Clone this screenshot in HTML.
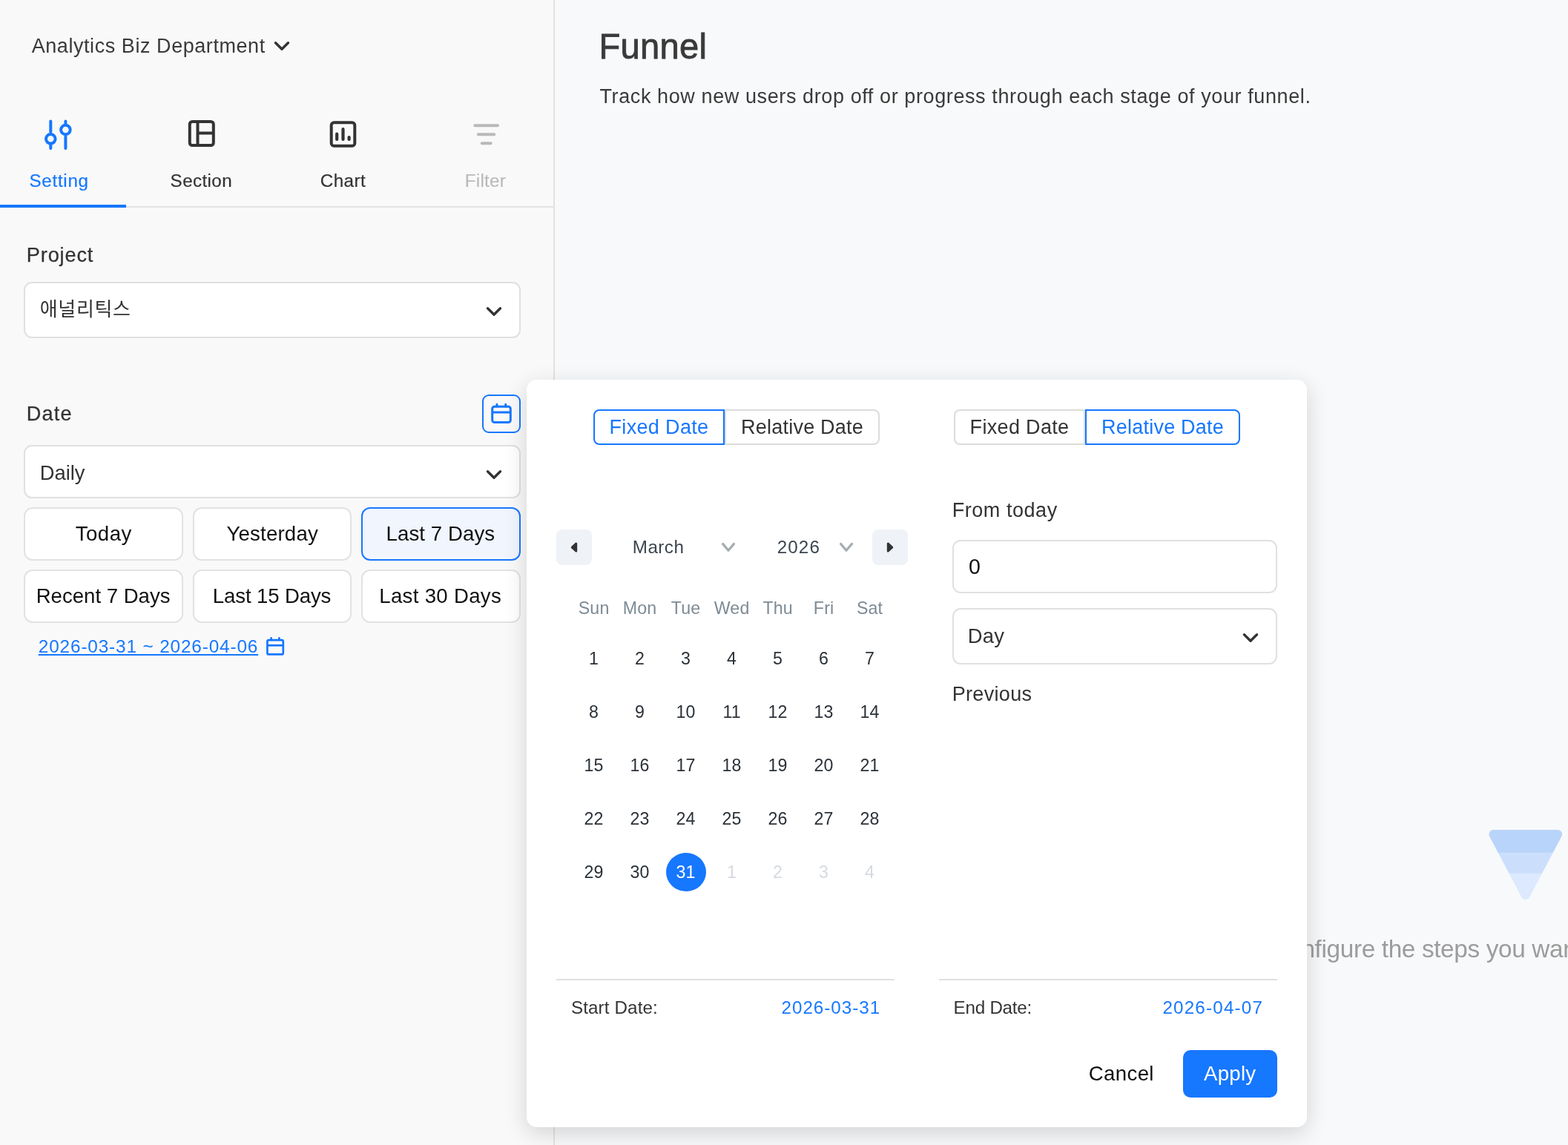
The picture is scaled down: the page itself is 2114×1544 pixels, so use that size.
<!DOCTYPE html>
<html lang="en"><head><meta charset="utf-8"><title>Funnel</title>
<style>
html,body{margin:0;padding:0}
body{width:2114px;height:1544px;overflow:hidden;position:relative;background:#f8f9fb;font-family:'Liberation Sans','Noto Sans CJK KR',sans-serif;}
#app{position:absolute;left:0;top:0;width:2114px;height:1544px;will-change:transform}
.b{position:absolute;box-sizing:border-box}
.t{position:absolute;white-space:nowrap;line-height:0;font-weight:400}
.t::before{content:'';display:inline-block;height:40px;width:0}
.c{text-align:center}
svg{position:absolute;left:0;top:0;overflow:visible}
.sel{background:#fff;border:2px solid #e0e0e0;border-radius:11px}
.pb{background:#fff;border:2px solid #e2e2e2;border-radius:12px}
</style></head><body><div id="app">

<aside class="b" style="left:0;top:0;width:748px;height:1544px;background:#f9f9f9;border-right:2px solid #e3e3e3">
<div class="b" style="left:0px;top:278px;width:746px;height:2px;background:#e3e3e3"></div>
<div class="b" style="left:0px;top:276px;width:170px;height:4px;background:#1677ff"></div>
<div class="b sel" style="left:32px;top:380px;width:670px;height:76px;"></div>
<div class="b sel" style="left:32px;top:600px;width:670px;height:72px;"></div>
<div class="b" style="left:650px;top:532px;width:52px;height:52px;border:2px solid #1677ff;border-radius:9px"></div>
<div class="b pb" style="left:32px;top:684px;width:214.7px;height:72px;"></div>
<div class="b pb" style="left:32px;top:768px;width:214.7px;height:72px;"></div>
<div class="b pb" style="left:259.7px;top:684px;width:214.7px;height:72px;"></div>
<div class="b pb" style="left:259.7px;top:768px;width:214.7px;height:72px;"></div>
<div class="b" style="left:487.3px;top:684px;width:214.7px;height:72px;background:#f1f5fe;border:2px solid #1677ff;border-radius:12px"></div>
<div class="b pb" style="left:487.3px;top:768px;width:214.7px;height:72px;"></div>
<span class="t" style="left:42.7px;top:31.0px;font-size:27px;color:#3a3a3a;letter-spacing:0.56px;">Analytics Biz Department</span>
<span class="t" style="left:39.5px;top:212.0px;font-size:24.2px;color:#1677ff;letter-spacing:0.70px;-webkit-text-stroke:0.2px #1677ff;">Setting</span>
<span class="t" style="left:229.6px;top:212.0px;font-size:24.2px;color:#333;letter-spacing:0.40px;-webkit-text-stroke:0.2px #333;">Section</span>
<span class="t" style="left:431.8px;top:212.0px;font-size:24.2px;color:#333;letter-spacing:0.45px;-webkit-text-stroke:0.2px #333;">Chart</span>
<span class="t" style="left:626.7px;top:212.0px;font-size:24.2px;color:#bbb;letter-spacing:0.29px;-webkit-text-stroke:0.2px #bbb;">Filter</span>
<span class="t" style="left:35.8px;top:313.0px;font-size:27.2px;color:#333;letter-spacing:0.83px;-webkit-text-stroke:0.25px #333;">Project</span>
<span class="t" style="left:53.8px;top:386.0px;font-size:26px;color:#333;letter-spacing:0.62px;">애널리틱스</span>
<span class="t" style="left:35.8px;top:527.0px;font-size:27.2px;color:#333;letter-spacing:1.10px;-webkit-text-stroke:0.25px #333;">Date</span>
<span class="t" style="left:53.8px;top:607.0px;font-size:27.4px;color:#333;letter-spacing:-0.08px;">Daily</span>
<span class="t" style="left:101.8px;top:689.0px;font-size:27.6px;color:#111;letter-spacing:0.45px;">Today</span>
<span class="t" style="left:305.4px;top:689.0px;font-size:27.6px;color:#111;letter-spacing:0.21px;">Yesterday</span>
<span class="t" style="left:520.6px;top:689.0px;font-size:27.6px;color:#111;letter-spacing:0.08px;">Last 7 Days</span>
<span class="t" style="left:48.7px;top:773.0px;font-size:27.6px;color:#111;letter-spacing:-0.01px;">Recent 7 Days</span>
<span class="t" style="left:286.8px;top:773.0px;font-size:27.6px;color:#111;letter-spacing:-0.13px;">Last 15 Days</span>
<span class="t" style="left:511.3px;top:773.0px;font-size:27.6px;color:#111;letter-spacing:0.31px;">Last 30 Days</span>
<span class="t" style="left:51.8px;top:840.0px;font-size:24.4px;color:#1677ff;letter-spacing:0.83px;text-decoration:underline;text-decoration-thickness:1.8px;text-underline-offset:2px;">2026-03-31 ~ 2026-04-06</span>
<svg width="748" height="1544" viewBox="0 0 748 1544" fill="none" stroke-linecap="round" stroke-linejoin="round">
<path d="M371.5 57.8 380 66.2 388.5 57.8" stroke="#333" stroke-width="3.4"/>
<g stroke="#1677ff" stroke-width="4"><path d="M68.3 163.5V178M68.3 195V200M88.4 163.5V166M88.4 184V200"/><circle cx="68.3" cy="187.3" r="6.3"/><circle cx="88.4" cy="175" r="6.3"/></g>
<g stroke="#333" stroke-width="4"><rect x="255.8" y="164" width="32" height="32" rx="3.5"/><path d="M266.5 164V196M266.5 179.5H288" stroke-linecap="butt"/></g>
<g stroke="#333" stroke-width="4"><rect x="446.7" y="165.3" width="31.6" height="31.4" rx="3.5"/><path d="M454.2 180.5V188M462.5 174.2V188M470.6 185V188" stroke-width="4.2"/></g>
<g stroke="#b9b9b9" stroke-width="4"><path d="M640.3 169.2H671M644.8 181.2H666.2M649.8 193.3H661.7"/></g>
<path d="M657.5 415.8 666 424.2 674.5 415.8" stroke="#333" stroke-width="3.4"/>
<path d="M657.5 635.8 666 644.2 674.5 635.8" stroke="#333" stroke-width="3.4"/>
<g stroke="#1677ff" stroke-width="3"><rect x="663.7" y="548.2" width="24.6" height="21.3" rx="3"/><path d="M663.7 556H688.3" stroke-linecap="butt"/><path d="M669.9 545.2V548M681.7 545.2V548"/></g>
<g stroke="#1677ff" stroke-width="2.7"><rect x="360.4" y="863.2" width="21.4" height="19.2" rx="2"/><path d="M360.4 870.3H381.8" stroke-linecap="butt"/><path d="M365.6 860.4V863M376.4 860.4V863"/></g>
</svg>
</aside>
<main class="b" style="left:748px;top:0;width:1366px;height:1544px;overflow:hidden">
<span class="t" style="left:59.4px;top:39.0px;font-size:47.2px;color:#3a3a3a;letter-spacing:0.24px;-webkit-text-stroke:0.8px #3a3a3a;">Funnel</span>
<span class="t" style="left:60.5px;top:99.0px;font-size:27px;color:#3a3a3a;letter-spacing:0.60px;">Track how new users drop off or progress through each stage of your funnel.</span>
<span class="t" style="left:964.5px;top:1251.0px;font-size:33.3px;color:#9c9c9c;letter-spacing:-0.34px">Configure the steps you want to analyze.</span>
<svg width="1366" height="1544" viewBox="748 0 1366 1544">
<defs><clipPath id="fc"><path d="M2008.1 1127.8A6 6 0 0 1 2013.4 1119.0L2100.1 1119.0A6 6 0 0 1 2105.4 1127.8L2062.1 1209.7A6 6 0 0 1 2051.4 1209.7Z"/></clipPath></defs>
<g clip-path="url(#fc)"><rect x="2000" y="1110" width="120" height="40.2" fill="#b9d4fa"/><rect x="2000" y="1150.2" width="120" height="27.7" fill="#cbdffc"/><rect x="2000" y="1177.9" width="120" height="45" fill="#dce9fe"/></g>
</svg>
</main>
<section class="b" style="left:710px;top:512px;width:1052px;height:1008px;background:#fff;border-radius:14px;box-shadow:0 8px 31px rgba(0,0,0,0.155)">
<div class="b" style="left:267px;top:40px;width:209px;height:48px;border:2px solid #dcdcdc;border-radius:0 8px 8px 0"></div>
<div class="b" style="left:90px;top:40px;width:177px;height:48px;border:2px solid #1677ff;border-radius:8px 0 0 8px"></div>
<div class="b" style="left:576px;top:40px;width:177px;height:48px;border:2px solid #dcdcdc;border-radius:8px 0 0 8px"></div>
<div class="b" style="left:753px;top:40px;width:209px;height:48px;border:2px solid #1677ff;border-radius:0 8px 8px 0"></div>
<div class="b" style="left:40px;top:202px;width:48px;height:48px;background:#eff2f7;border-radius:8px"></div>
<div class="b" style="left:466px;top:202px;width:48px;height:48px;background:#eff2f7;border-radius:8px"></div>
<div class="b" style="left:188px;top:638px;width:54px;height:52px;background:#1677ff;border-radius:50%"></div>
<div class="b sel" style="left:574px;top:216px;width:438px;height:72px;"></div>
<div class="b sel" style="left:574px;top:308px;width:438px;height:76px;"></div>
<div class="b" style="left:40px;top:807.5px;width:456px;height:2px;background:#e0e0e0"></div>
<div class="b" style="left:556px;top:807.5px;width:456px;height:2px;background:#e0e0e0"></div>
<div class="b" style="left:885px;top:904px;width:127px;height:64px;background:#1677ff;border-radius:10px"></div>
<span class="t" style="left:111.5px;top:33.0px;font-size:27px;color:#1677ff;letter-spacing:0.34px;">Fixed Date</span>
<span class="t" style="left:289.1px;top:33.0px;font-size:27px;color:#333;letter-spacing:0.22px;">Relative Date</span>
<span class="t" style="left:597.6px;top:33.0px;font-size:27px;color:#333;letter-spacing:0.33px;">Fixed Date</span>
<span class="t" style="left:775.1px;top:33.0px;font-size:27px;color:#1677ff;letter-spacing:0.22px;">Relative Date</span>
<span class="t" style="left:142.8px;top:194.0px;font-size:24.2px;color:#3b454e;letter-spacing:0.46px;">March</span>
<span class="t" style="left:337.8px;top:194.0px;font-size:24.2px;color:#3b454e;letter-spacing:1.08px;">2026</span>
<span class="t" style="left:573.7px;top:145.0px;font-size:27px;color:#333;letter-spacing:0.55px;">From today</span>
<span class="t" style="left:596.0px;top:222.0px;font-size:28.6px;color:#111;">0</span>
<span class="t" style="left:594.8px;top:315.0px;font-size:27.4px;color:#333;letter-spacing:0.23px;">Day</span>
<span class="t" style="left:573.7px;top:393.0px;font-size:27px;color:#333;letter-spacing:0.33px;">Previous</span>
<span class="t" style="left:59.9px;top:815.0px;font-size:24.2px;color:#333;letter-spacing:0.13px;">Start Date:</span>
<span class="t" style="left:343.5px;top:815.0px;font-size:24.2px;color:#1677ff;letter-spacing:1.00px;">2026-03-31</span>
<span class="t" style="left:575.5px;top:815.0px;font-size:24.2px;color:#333;letter-spacing:-0.22px;">End Date:</span>
<span class="t" style="left:857.4px;top:815.0px;font-size:24.2px;color:#1677ff;letter-spacing:1.20px;">2026-04-07</span>
<span class="t" style="left:757.8px;top:905.0px;font-size:27.6px;color:#111;letter-spacing:0.36px;">Cancel</span>
<span class="t" style="left:913.1px;top:905.0px;font-size:27.6px;color:#fff;letter-spacing:0.26px;">Apply</span>
<span class="t c" style="left:50.6px;top:276.0px;width:80px;font-size:23.2px;color:#7d8b95;letter-spacing:0.15px;">Sun</span>
<span class="t c" style="left:112.6px;top:276.0px;width:80px;font-size:23.2px;color:#7d8b95;letter-spacing:0.15px;">Mon</span>
<span class="t c" style="left:174.6px;top:276.0px;width:80px;font-size:23.2px;color:#7d8b95;letter-spacing:0.15px;">Tue</span>
<span class="t c" style="left:236.6px;top:276.0px;width:80px;font-size:23.2px;color:#7d8b95;letter-spacing:0.15px;">Wed</span>
<span class="t c" style="left:298.6px;top:276.0px;width:80px;font-size:23.2px;color:#7d8b95;letter-spacing:0.15px;">Thu</span>
<span class="t c" style="left:360.6px;top:276.0px;width:80px;font-size:23.2px;color:#7d8b95;letter-spacing:0.15px;">Fri</span>
<span class="t c" style="left:422.6px;top:276.0px;width:80px;font-size:23.2px;color:#7d8b95;letter-spacing:0.15px;">Sat</span>
<span class="t c" style="left:50.5px;top:344.0px;width:80px;font-size:23.2px;color:#2b3138;letter-spacing:0px;">1</span>
<span class="t c" style="left:112.5px;top:344.0px;width:80px;font-size:23.2px;color:#2b3138;letter-spacing:0px;">2</span>
<span class="t c" style="left:174.5px;top:344.0px;width:80px;font-size:23.2px;color:#2b3138;letter-spacing:0px;">3</span>
<span class="t c" style="left:236.5px;top:344.0px;width:80px;font-size:23.2px;color:#2b3138;letter-spacing:0px;">4</span>
<span class="t c" style="left:298.5px;top:344.0px;width:80px;font-size:23.2px;color:#2b3138;letter-spacing:0px;">5</span>
<span class="t c" style="left:360.5px;top:344.0px;width:80px;font-size:23.2px;color:#2b3138;letter-spacing:0px;">6</span>
<span class="t c" style="left:422.5px;top:344.0px;width:80px;font-size:23.2px;color:#2b3138;letter-spacing:0px;">7</span>
<span class="t c" style="left:50.5px;top:416.0px;width:80px;font-size:23.2px;color:#2b3138;letter-spacing:0px;">8</span>
<span class="t c" style="left:112.5px;top:416.0px;width:80px;font-size:23.2px;color:#2b3138;letter-spacing:0px;">9</span>
<span class="t c" style="left:174.5px;top:416.0px;width:80px;font-size:23.2px;color:#2b3138;letter-spacing:0px;">10</span>
<span class="t c" style="left:236.5px;top:416.0px;width:80px;font-size:23.2px;color:#2b3138;letter-spacing:0px;">11</span>
<span class="t c" style="left:298.5px;top:416.0px;width:80px;font-size:23.2px;color:#2b3138;letter-spacing:0px;">12</span>
<span class="t c" style="left:360.5px;top:416.0px;width:80px;font-size:23.2px;color:#2b3138;letter-spacing:0px;">13</span>
<span class="t c" style="left:422.5px;top:416.0px;width:80px;font-size:23.2px;color:#2b3138;letter-spacing:0px;">14</span>
<span class="t c" style="left:50.5px;top:488.0px;width:80px;font-size:23.2px;color:#2b3138;letter-spacing:0px;">15</span>
<span class="t c" style="left:112.5px;top:488.0px;width:80px;font-size:23.2px;color:#2b3138;letter-spacing:0px;">16</span>
<span class="t c" style="left:174.5px;top:488.0px;width:80px;font-size:23.2px;color:#2b3138;letter-spacing:0px;">17</span>
<span class="t c" style="left:236.5px;top:488.0px;width:80px;font-size:23.2px;color:#2b3138;letter-spacing:0px;">18</span>
<span class="t c" style="left:298.5px;top:488.0px;width:80px;font-size:23.2px;color:#2b3138;letter-spacing:0px;">19</span>
<span class="t c" style="left:360.5px;top:488.0px;width:80px;font-size:23.2px;color:#2b3138;letter-spacing:0px;">20</span>
<span class="t c" style="left:422.5px;top:488.0px;width:80px;font-size:23.2px;color:#2b3138;letter-spacing:0px;">21</span>
<span class="t c" style="left:50.5px;top:560.0px;width:80px;font-size:23.2px;color:#2b3138;letter-spacing:0px;">22</span>
<span class="t c" style="left:112.5px;top:560.0px;width:80px;font-size:23.2px;color:#2b3138;letter-spacing:0px;">23</span>
<span class="t c" style="left:174.5px;top:560.0px;width:80px;font-size:23.2px;color:#2b3138;letter-spacing:0px;">24</span>
<span class="t c" style="left:236.5px;top:560.0px;width:80px;font-size:23.2px;color:#2b3138;letter-spacing:0px;">25</span>
<span class="t c" style="left:298.5px;top:560.0px;width:80px;font-size:23.2px;color:#2b3138;letter-spacing:0px;">26</span>
<span class="t c" style="left:360.5px;top:560.0px;width:80px;font-size:23.2px;color:#2b3138;letter-spacing:0px;">27</span>
<span class="t c" style="left:422.5px;top:560.0px;width:80px;font-size:23.2px;color:#2b3138;letter-spacing:0px;">28</span>
<span class="t c" style="left:50.5px;top:632.0px;width:80px;font-size:23.2px;color:#2b3138;letter-spacing:0px;">29</span>
<span class="t c" style="left:112.5px;top:632.0px;width:80px;font-size:23.2px;color:#2b3138;letter-spacing:0px;">30</span>
<span class="t c" style="left:174.5px;top:632.0px;width:80px;font-size:23.2px;color:#fff;letter-spacing:0px;">31</span>
<span class="t c" style="left:236.5px;top:632.0px;width:80px;font-size:23.2px;color:#d5dbe0;letter-spacing:0px;">1</span>
<span class="t c" style="left:298.5px;top:632.0px;width:80px;font-size:23.2px;color:#d5dbe0;letter-spacing:0px;">2</span>
<span class="t c" style="left:360.5px;top:632.0px;width:80px;font-size:23.2px;color:#d5dbe0;letter-spacing:0px;">3</span>
<span class="t c" style="left:422.5px;top:632.0px;width:80px;font-size:23.2px;color:#d5dbe0;letter-spacing:0px;">4</span>
<svg width="1052" height="1008" viewBox="710 512 1052 1008" fill="none" stroke-linecap="round" stroke-linejoin="round">
<path d="M776.8 732.9V743.3L771.2 738.1Z" fill="#333" stroke="#333" stroke-width="2.8"/>
<path d="M1197.2 732.9V743.3L1202.8 738.1Z" fill="#333" stroke="#333" stroke-width="2.8"/>
<path d="M974.5 733.4 982 742.2 989.5 733.4" stroke="#a5adb1" stroke-width="3.2"/>
<path d="M1133.5 733.4 1141 742.2 1148.5 733.4" stroke="#a5adb1" stroke-width="3.2"/>
<path d="M1677.5 855.8 1686 864.2 1694.5 855.8" stroke="#333" stroke-width="3.4"/>
</svg>
</section>
</div></body></html>
